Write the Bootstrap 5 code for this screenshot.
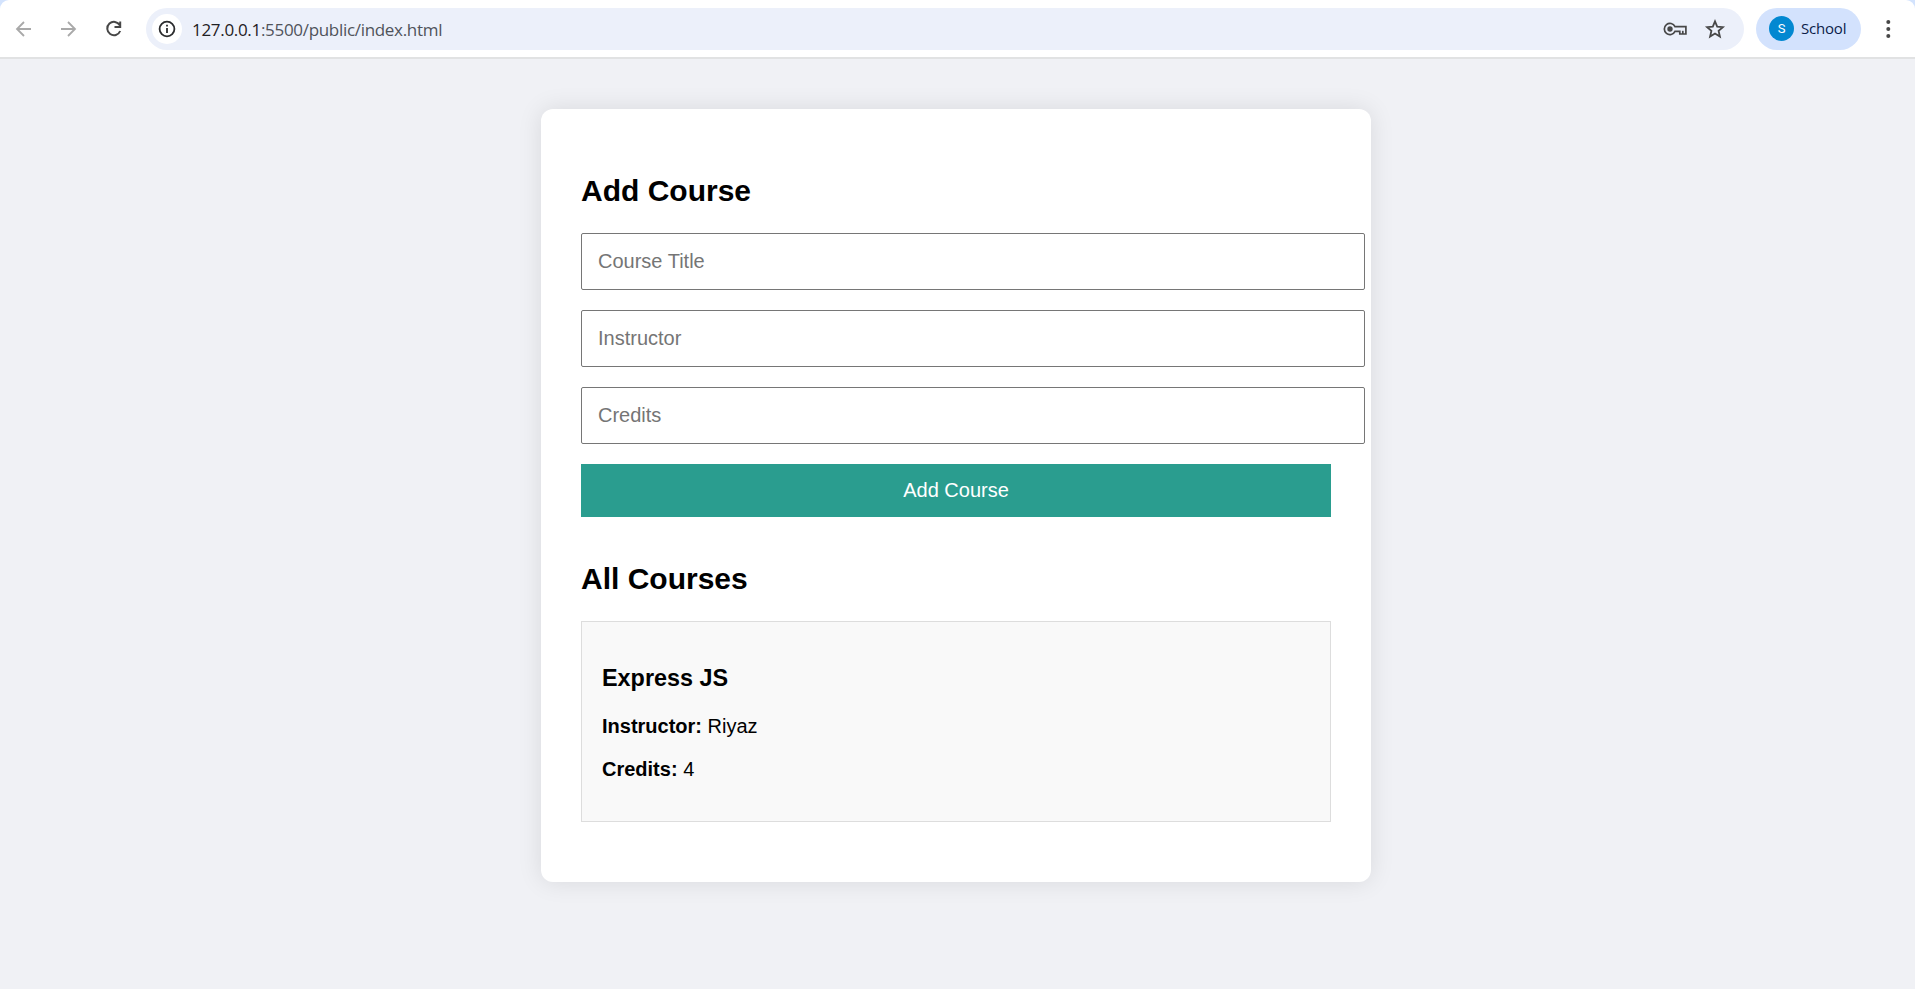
<!DOCTYPE html>
<html lang="en">
<head>
<meta charset="utf-8">
<title>Courses</title>
<link href="https://cdn.jsdelivr.net/npm/bootstrap@5.3.0/dist/css/bootstrap.min.css" rel="stylesheet">
<style>
body{background:#f0f1f5;color:#000;font-family:"Liberation Sans",Arial,sans-serif;font-size:20px;line-height:23px;min-height:989px}
.toolbar-strip{background:#d3e3fd}
.toolbar-row{height:59px;background:#fff;border-bottom:2px solid #e1e2e3;border-radius:9px 9px 0 0;font-family:"Open Sans","Noto Sans",sans-serif}
.toolbar-row svg{display:block;flex:none}
.nav-icons{width:146px;padding-left:12px;gap:21px}
.address{height:42px;margin-top:1px;background:#ecf0fa;border-radius:21px;padding:0 18px 0 6px}
.info-dot{width:30px;height:30px;background:#fff}
.url{font-size:17px;margin-left:10px;color:#50535a;letter-spacing:-.31px;white-space:nowrap}
.url span{color:#1f2023}
.key-icon{margin-right:17px}
.profile{width:105px;height:42px;margin-left:12px;background:#d3e2fd;border-radius:21px;padding-left:13px;color:#0b1d49;font-size:15px}
.profile-name{margin-left:7px;letter-spacing:-.2px}
.avatar{width:25px;height:25px;background:#0288d1;color:#fff;font:13px/25px Roboto,sans-serif}
.panel{width:830px;height:773px;margin:50px 0 0 541px;padding:65px 40px 40px;background:#fff;border-radius:12px;box-shadow:0 0 25px rgba(0,0,0,.1)}
.panel h2{font-size:30px;font-weight:700;line-height:34px;margin:0 0 25px}
.panel .list-title{margin-top:45px}
.field{display:block;width:784px;height:57px;margin-bottom:20px;padding:0 16px;border:1px solid #767676;border-radius:2px;font-size:20px;background:#fff}
.field::placeholder{color:#757575}
.add-btn{height:53px;padding:0 0 2px;background:#2a9d8f;color:#fff;font-size:20px}
.add-btn:hover{background:#268d81;color:#fff}
.course{height:201px;border:1px solid #ddd;background:#f9f9f9;padding:43px 20px 20px}
.course h3{font-size:23.4px;font-weight:700;line-height:27px;margin:0 0 23px}
.course p{margin:0 0 20px}
</style>
</head>
<body>
<header class="toolbar-strip">
<div class="toolbar-row d-flex align-items-center">
  <div class="nav-icons d-flex align-items-center">
    <svg width="24" height="24" viewBox="0 0 24 24" fill="none" stroke="#a9a9a9" stroke-width="1.8"><path d="M19 12H5.5M12 5l-7 7 7 7"/></svg>
    <svg width="24" height="24" viewBox="0 0 24 24" fill="none" stroke="#a9a9a9" stroke-width="1.8"><path d="M4 12h13.5M11 5l7 7-7 7"/></svg>
    <svg width="24" height="24" viewBox="0 0 24 24" fill="none" stroke="#474747" stroke-width="2"><path d="M17.8 8.2A6.7 6.7 0 1 0 18.2 14M18.2 4.5v5.5h-5.7"/></svg>
  </div>
  <div class="address d-flex align-items-center flex-grow-1">
    <span class="info-dot rounded-circle d-flex align-items-center justify-content-center"><svg width="18" height="18" viewBox="0 0 18 18" fill="none" stroke="#2b2c2e" stroke-width="1.8"><circle cx="9" cy="9" r="7.4"/><path d="M9 8v5M9 4.8v1.8"/></svg></span>
    <div class="url flex-grow-1"><span>127.0.0.1</span>:5500/public/index.html</div>
    <svg class="key-icon" width="24" height="14" viewBox="0 0 24 14" fill="none" stroke="#474747" stroke-width="1.7"><path d="M12 4.6A5.6 5.6 0 1 0 12 9.4H16.8V12H22.9V4.6Z"/><circle cx="7" cy="7" r="2.7" fill="#474747" stroke="none"/><path d="M19.8 12V8.8"/></svg>
    <svg width="22" height="22" viewBox="0 0 22 22" fill="none" stroke="#474747" stroke-width="1.8"><path d="M11 3.3l2.2 5.3 5.7.5-4.3 3.8 1.3 5.6-4.9-3-4.9 3 1.3-5.6-4.3-3.8 5.7-.5Z"/></svg>
  </div>
  <div class="profile d-flex align-items-center"><span class="avatar rounded-circle text-center">S</span><span class="profile-name">School</span></div>
  <svg width="54" height="24" viewBox="0 0 54 24" fill="#474747"><circle cx="27.3" cy="5" r="2"/><circle cx="27.3" cy="12" r="2"/><circle cx="27.3" cy="19" r="2"/></svg>
</div>
</header>
<main class="panel">
  <h2>Add Course</h2>
  <form>
    <input class="field" type="text" placeholder="Course Title">
    <input class="field" type="text" placeholder="Instructor">
    <input class="field" type="text" placeholder="Credits">
    <button class="add-btn btn w-100 rounded-0 border-0" type="button">Add Course</button>
  </form>
  <h2 class="list-title">All Courses</h2>
  <article class="course">
    <h3>Express JS</h3>
    <p><strong>Instructor:</strong> Riyaz</p>
    <p><strong>Credits:</strong> 4</p>
  </article>
</main>
<script src="https://cdn.jsdelivr.net/npm/bootstrap@5.3.0/dist/js/bootstrap.bundle.min.js"></script>
</body>
</html>
